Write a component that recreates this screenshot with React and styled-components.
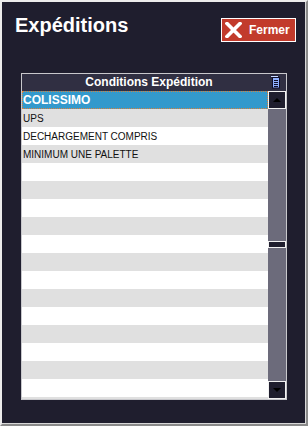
import React from "react";
import styled, { createGlobalStyle } from "styled-components";

const GlobalStyle = createGlobalStyle`
    html, body {
        margin: 0;
        padding: 0;
        background: #1f1e2e;
        font-family: "Liberation Sans", Arial, sans-serif;
    }
`;

const Window = styled.div`
    box-sizing: border-box;
    width: 308px;
    height: 426px;
    background: #1f1e2e;
    border-top: 2px solid #ececec;
    border-left: 2px solid #ececec;
    border-right: 2px solid #8a8a8a;
    border-bottom: 2px solid #8a8a8a;
    box-shadow: inset -1px -1px 0 #d8d8d8;
    display: flex;
    flex-direction: column;
`;

const TopBar = styled.div`
    display: flex;
    align-items: flex-start;
    justify-content: space-between;
    padding: 13px 10px 0 13px;
`;

const Title = styled.h1`
    margin: 0;
    font-size: 20px;
    line-height: 20px;
    font-weight: bold;
    color: #ffffff;
`;

const CloseButton = styled.button`
    box-sizing: border-box;
    margin-top: 3px;
    width: 75px;
    height: 24px;
    padding: 0 0 0 3px;
    display: flex;
    align-items: center;
    gap: 7px;
    background: #c23b2c;
    border: 1px solid #ffffff;
    color: #ffffff;
    font-family: "Liberation Sans", Arial, sans-serif;
    font-size: 12px;
    font-weight: bold;
    cursor: pointer;
`;

const Table = styled.div`
    box-sizing: border-box;
    width: 266px;
    margin: 31px 0 0 19px;
    border: 1px solid #c8c8cc;
    display: flex;
    flex-direction: column;
`;

const HeaderBar = styled.div`
    position: relative;
    height: 17px;
    background: #302f42;
    color: #ffffff;
    font-size: 12px;
    font-weight: bold;
    line-height: 17px;
    text-align: center;
    padding-right: 10px;
`;

const HeaderIcon = styled.svg`
    position: absolute;
    right: 6px;
    top: 1px;
`;

const Body = styled.div`
    display: grid;
    grid-template-columns: 246px 18px;
    height: 308px;
    overflow: hidden;
`;

const Rows = styled.div`
    display: flex;
    flex-direction: column;
    overflow: hidden;
`;

const Row = styled.div`
    box-sizing: border-box;
    flex: 0 0 18px;
    height: 18px;
    padding-left: 1px;
    display: flex;
    align-items: center;
    text-transform: uppercase;
    white-space: nowrap;
    color: ${(p) => (p.$selected ? "#ffffff" : "#111111")};
    font-size: ${(p) => (p.$selected ? "12px" : "10px")};
    font-weight: ${(p) => (p.$selected ? "bold" : "normal")};
    background: ${(p) =>
        p.$selected ? "#3399cc" : p.$odd ? "#e0e0e0" : "#ffffff"};
    border: ${(p) => (p.$selected ? "1px dotted #d9823b" : "none")};
    padding-left: ${(p) => (p.$selected ? "0" : "1px")};
`;

const ScrollBar = styled.div`
    display: flex;
    flex-direction: column;
    background: #6c6b7b;
`;

const Arrow = styled.div`
    box-sizing: border-box;
    height: 18px;
    flex: 0 0 18px;
    background: #1f1e2e;
    border: 1px solid #f2f2f2;
    display: flex;
    align-items: center;
    justify-content: center;
    &::after {
        content: "";
        border-left: 4px solid transparent;
        border-right: 4px solid transparent;
        ${(p) =>
            p.$down
                ? "border-top: 4px solid #000;"
                : "border-bottom: 4px solid #000;"}
    }
`;

const Track = styled.div`
    flex: 1;
    display: flex;
    flex-direction: column;
    padding-top: 132px;
`;

const Thumb = styled.div`
    box-sizing: border-box;
    height: 7px;
    background: #1f1e2e;
    border: 1px solid #f2f2f2;
`;

const items = ["Colissimo", "UPS", "Dechargement compris", "Minimum une palette"];

const CrossIcon = () => (
    <svg width="17" height="16" viewBox="0 0 17 16">
        <path
            d="M2 1.5 L15 14.5 M15 1.5 L2 14.5"
            stroke="#ffffff"
            strokeWidth="3.6"
            strokeLinecap="square"
        />
    </svg>
);

export default function App() {
    const rows = Array.from({ length: 18 }, (_, i) => items[i] || "");
    return (
        <>
            <GlobalStyle />
            <Window>
                <TopBar>
                    <Title>Expéditions</Title>
                    <CloseButton>
                        <CrossIcon />
                        Fermer
                    </CloseButton>
                </TopBar>
                <Table>
                    <HeaderBar>
                        Conditions Expédition
                        <HeaderIcon width="10" height="14" viewBox="0 0 10 14">
                            <rect x="1" y="0.5" width="7" height="2" fill="#c8d8ff" stroke="#20203a" strokeWidth="1" />
                            <rect x="2.5" y="2.5" width="7" height="10.5" fill="#8fb0ff" stroke="#10102a" strokeWidth="1" />
                            <path d="M4 5.5h4M4 7.5h4M4 9.5h4M4 11.5h4" stroke="#10102a" strokeWidth="1" />
                        </HeaderIcon>
                    </HeaderBar>
                    <Body>
                        <Rows>
                            {rows.map((text, i) => (
                                <Row key={i} $selected={i === 0} $odd={i % 2 === 1}>
                                    {text}
                                </Row>
                            ))}
                        </Rows>
                        <ScrollBar>
                            <Arrow />
                            <Track>
                                <Thumb />
                            </Track>
                            <Arrow $down />
                        </ScrollBar>
                    </Body>
                </Table>
            </Window>
        </>
    );
}
